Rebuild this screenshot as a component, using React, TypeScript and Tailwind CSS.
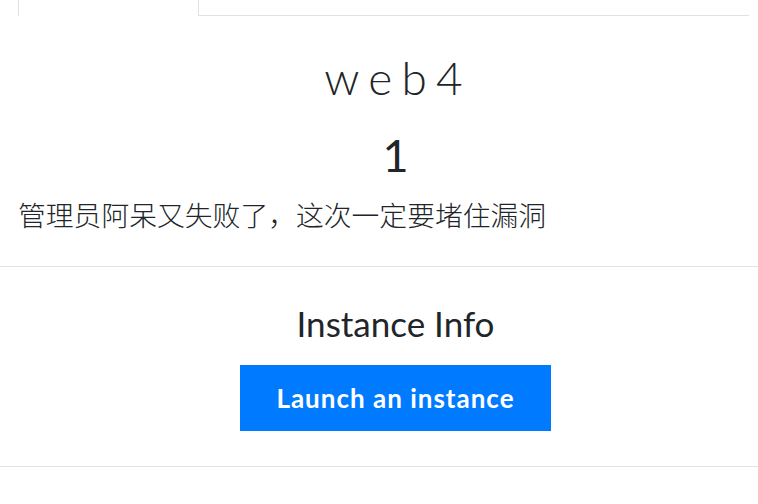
import React from 'react';

const App: React.FC = () => {
  return (
    <div className="w-[758px] h-[504px] overflow-hidden bg-white text-[#212529] font-['Lato','Noto_Sans_CJK_SC',sans-serif]">
      {/* Tabs */}
      <div className="flex h-[16px]">
        <div className="ml-[18px] w-[181px] border-l border-r border-[#dee2e6]" />
        <div className="w-[550px] border-b border-[#dee2e6]" />
      </div>

      {/* Challenge header */}
      <div className="w-[773px] pl-[18px]">
        <h2 className="mt-[34px] pl-[5px] text-center text-[46px] leading-[55px] font-light tracking-[0.2em]">web4</h2>
        <h4 className="mt-[23px] text-center text-[45px] leading-[54px] font-normal">1</h4>
        <p className="mt-[11px] text-[27.8px] leading-[42px] font-['Noto_Sans_CJK_SC',sans-serif] font-light">
          管理员阿呆又失败了，这次一定要堵住漏洞
        </p>
      </div>

      <hr className="mt-[31px] border-t border-[#e3e3e3]" />

      {/* Instance */}
      <div className="w-[773px] pl-[18px] flex flex-col items-center">
        <h3 className="mt-[35px] text-[35px] leading-[42px] font-normal">Instance Info</h3>
        <button className="mt-[21px] w-[311px] h-[66px] bg-[#007bff] text-white text-[26px] font-bold tracking-[1px]">
          Launch an instance
        </button>
      </div>

      <hr className="mt-[35px] border-t border-[#e3e3e3]" />
    </div>
  );
};

export default App;
